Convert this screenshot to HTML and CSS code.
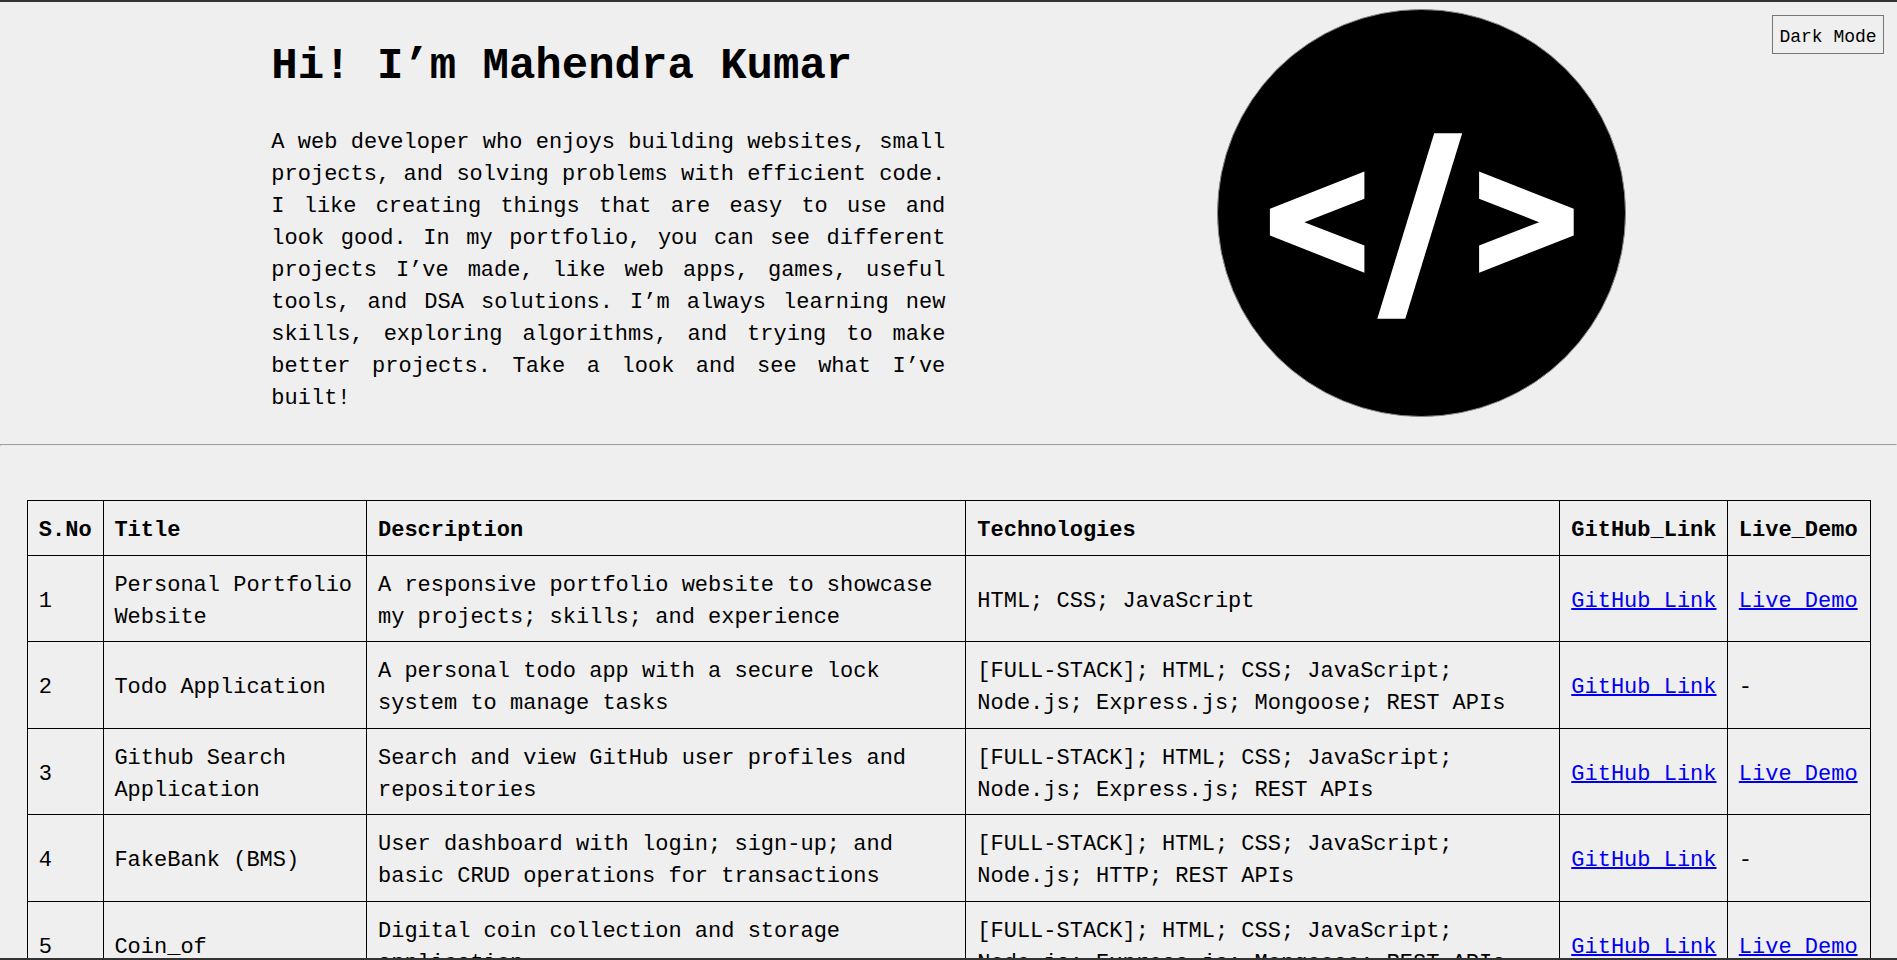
FILE: index.html
```html
<!DOCTYPE html>
<html lang="en">
<head>
<meta charset="utf-8">
<title>Mahendra Kumar</title>
<link rel="stylesheet" href="styles.css">
</head>
<body>
<button class="theme-toggle" type="button">Dark Mode</button>
<header class="hero">
  <div class="intro">
    <h1>Hi! I’m Mahendra Kumar</h1>
    <p>A web developer who enjoys building websites, small projects, and solving problems with efficient code. I like creating things that are easy to use and look good. In my portfolio, you can see different projects I’ve made, like web apps, games, useful tools, and DSA solutions. I’m always learning new skills, exploring algorithms, and trying to make better projects. Take a look and see what I’ve built!</p>
  </div>
  <svg class="logo" viewBox="0 0 409 408" aria-label="code logo">
    <ellipse cx="204.5" cy="204" rx="204" ry="203.5" fill="#000" stroke="#888" stroke-width="1"/>
    <polygon fill="#fff" points="147.4,162.5 52.9,199.8 52.9,226.5 147.4,263.8 147.4,236.5 87.4,213.2 147.4,189.8"/>
    <polygon fill="#fff" points="217.2,124.3 245.2,124.3 188.3,309.7 160.3,309.7"/>
    <polygon fill="#fff" points="262.1,162.5 356.7,199.8 356.7,226.5 262.1,263.8 262.1,236.5 322.1,213.2 262.1,189.8"/>
  </svg>
</header>
<hr class="divider">
<main class="projects">
  <table>
    <colgroup>
      <col class="c-no"><col class="c-title"><col class="c-desc"><col class="c-tech"><col class="c-gh"><col class="c-live">
    </colgroup>
    <thead>
      <tr><th>S.No</th><th>Title</th><th>Description</th><th>Technologies</th><th>GitHub_Link</th><th>Live_Demo</th></tr>
    </thead>
    <tbody>
      <tr>
        <td>1</td><td>Personal Portfolio Website</td>
        <td>A responsive portfolio website to showcase my projects; skills; and experience</td>
        <td>HTML; CSS; JavaScript</td>
        <td><a href="#">GitHub Link</a></td><td><a href="#">Live Demo</a></td>
      </tr>
      <tr>
        <td>2</td><td>Todo Application</td>
        <td>A personal todo app with a secure lock system to manage tasks</td>
        <td>[FULL-STACK]; HTML; CSS; JavaScript; Node.js; Express.js; Mongoose; REST APIs</td>
        <td><a href="#">GitHub Link</a></td><td>-</td>
      </tr>
      <tr>
        <td>3</td><td>Github Search Application</td>
        <td>Search and view GitHub user profiles and repositories</td>
        <td>[FULL-STACK]; HTML; CSS; JavaScript; Node.js; Express.js; REST APIs</td>
        <td><a href="#">GitHub Link</a></td><td><a href="#">Live Demo</a></td>
      </tr>
      <tr>
        <td>4</td><td>FakeBank (BMS)</td>
        <td>User dashboard with login; sign-up; and basic CRUD operations for transactions</td>
        <td>[FULL-STACK]; HTML; CSS; JavaScript; Node.js; HTTP; REST APIs</td>
        <td><a href="#">GitHub Link</a></td><td>-</td>
      </tr>
      <tr>
        <td>5</td><td>Coin_of</td>
        <td>Digital coin collection and storage application</td>
        <td>[FULL-STACK]; HTML; CSS; JavaScript; Node.js; Express.js; Mongoose; REST APIs</td>
        <td><a href="#">GitHub Link</a></td><td><a href="#">Live Demo</a></td>
      </tr>
    </tbody>
  </table>
</main>
</body>
</html>
```
FILE: styles.css
```css
* { box-sizing: border-box; }
html, body { height: 100%; margin: 0; overflow: hidden; }
body {
  position: relative;
  background: #efefef;
  color: #000;
  font-family: "Liberation Mono", monospace;
  font-size: 22px;
  line-height: 32px;
  border-top: 2px solid #333;
  border-bottom: 2px solid #333;
}
.theme-toggle {
  position: absolute;
  top: 13px;
  right: 13px;
  width: 112px;
  height: 39px;
  padding: 4px 0 0;
  background: #efefef;
  color: #000;
  border: 1px solid #767676;
  border-radius: 0;
  font-family: "Liberation Mono", monospace;
  font-size: 18px;
}
.hero {
  display: flex;
  justify-content: space-evenly;
  align-items: flex-start;
  height: 442px;
  padding-top: 7px;
}
.intro { width: 674px; }
.intro h1 {
  margin: 32px 0 36px;
  font-size: 44px;
  line-height: 50px;
  font-weight: 700;
}
.intro p { margin: 0; text-align: justify; }
.logo { width: 409px; height: 408px; flex: none; }
.divider {
  margin: 0;
  height: 2px;
  border-style: solid;
  border-width: 1px;
  border-color: #a0a0a0 #eaeaea #eaeaea #a0a0a0;
}
.projects { padding: 54px 27px 0; }
table { width: 100%; border-collapse: collapse; table-layout: fixed; }
.c-no { width: 75.6px; }
.c-title { width: 263.6px; }
.c-desc { width: 599.3px; }
.c-tech { width: 594px; }
.c-gh { width: 167.5px; }
.c-live { width: 143px; }
th, td {
  border: 1px solid #000;
  padding: 14px 10.8px 7.6px;
  text-align: left;
  vertical-align: middle;
}
th { font-weight: 700; }
a {
  color: #00e;
  white-space: nowrap;
  text-decoration-thickness: 2px;
}
```
